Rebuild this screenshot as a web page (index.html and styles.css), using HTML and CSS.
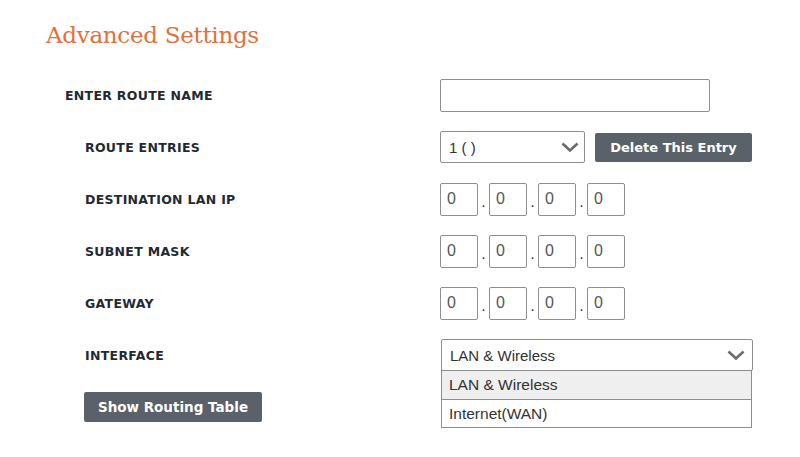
FILE: index.html
```html
<!DOCTYPE html>
<html lang="en">
<head>
  <meta charset="UTF-8">
  <meta name="viewport" content="width=device-width, initial-scale=1.0">
  <title>Advanced Settings</title>
  <link rel="stylesheet" href="styles.css">
</head>
<body>
  <h1>Advanced Settings</h1>
  <form id="routeForm">
    <!-- Route name -->
    <div class="row">
      <label class="label label-top" for="route_name">ENTER ROUTE NAME</label>
      <input type="text" id="route_name" class="text-input">
    </div>

    <!-- Route entries -->
    <div class="row">
      <label class="label">ROUTE ENTRIES</label>
      <div class="select select-entries">
        <span>1 ( )</span>
        <svg class="chevron" width="18" height="10" viewBox="0 0 18 10"><path d="M1.5 1.5 L9 8.5 L16.5 1.5" fill="none" stroke="#6b6b6b" stroke-width="2.6"/></svg>
      </div>
      <button type="button" class="btn btn-delete">Delete This Entry</button>
    </div>

    <!-- Destination LAN IP -->
    <div class="row">
      <label class="label">DESTINATION LAN IP</label>
      <div class="ip">
        <input type="text" value="0"><span class="dot">.</span>
        <input type="text" value="0"><span class="dot">.</span>
        <input type="text" value="0"><span class="dot">.</span>
        <input type="text" value="0">
      </div>
    </div>

    <!-- Subnet mask -->
    <div class="row">
      <label class="label">SUBNET MASK</label>
      <div class="ip">
        <input type="text" value="0"><span class="dot">.</span>
        <input type="text" value="0"><span class="dot">.</span>
        <input type="text" value="0"><span class="dot">.</span>
        <input type="text" value="0">
      </div>
    </div>

    <!-- Gateway -->
    <div class="row">
      <label class="label">GATEWAY</label>
      <div class="ip">
        <input type="text" value="0"><span class="dot">.</span>
        <input type="text" value="0"><span class="dot">.</span>
        <input type="text" value="0"><span class="dot">.</span>
        <input type="text" value="0">
      </div>
    </div>

    <!-- Interface (open dropdown) -->
    <div class="row">
      <label class="label">INTERFACE</label>
      <div class="select select-interface">
        <span>LAN &amp; Wireless</span>
        <svg class="chevron" width="18" height="10" viewBox="0 0 18 10"><path d="M1.5 1.5 L9 8.5 L16.5 1.5" fill="none" stroke="#6b6b6b" stroke-width="2.6"/></svg>
        <ul class="options">
          <li class="selected">LAN &amp; Wireless</li>
          <li>Internet(WAN)</li>
        </ul>
      </div>
    </div>

    <div class="actions">
      <button type="button" class="btn btn-table">Show Routing Table</button>
    </div>
  </form>
</body>
</html>
```

FILE: styles.css
```css
/* General Styles */
html, body {
  min-height: 457px;
}

body {
  margin: 0;
  padding: 0;
  background-color: #fff;
  font-family: "DejaVu Sans", sans-serif;
  color: #1f2a33;
}

h1 {
  margin: 0 0 19px 0;
  padding: 20px 0 0 46px;
  height: 30px;
  line-height: 30px;
  font-family: "DejaVu Serif", serif;
  font-weight: normal;
  font-size: 23px;
  letter-spacing: -0.3px;
  color: #e2703a;
}

form {
  margin: 0;
}

.row {
  display: flex;
  align-items: center;
  height: 52px;
}

.label {
  box-sizing: border-box;
  width: 440px;
  padding-left: 85px;
  font-size: 12.5px;
  font-weight: bold;
  letter-spacing: 0.3px;
}

.label-top {
  padding-left: 65px;
}

.text-input {
  box-sizing: border-box;
  width: 270px;
  height: 33px;
  margin: 0;
  border: 1px solid #8e8e8e;
  border-radius: 2px;
}

/* Select look-alikes */
.select {
  position: relative;
  box-sizing: border-box;
  display: flex;
  align-items: center;
  justify-content: space-between;
  height: 32px;
  padding: 0 5px 0 8px;
  border: 1px solid #8e8e8e;
  border-radius: 2px;
  font-family: "Liberation Sans", Arial, sans-serif;
  font-size: 15px;
  color: #333;
}

.select-entries {
  width: 145px;
}

.select-interface {
  width: 312px;
  margin-left: 1px;
  padding-right: 7px;
  z-index: 2;
}

.options {
  position: absolute;
  top: 30px;
  left: -1px;
  right: 0;
  margin: 0;
  padding: 0;
  list-style: none;
  border: 1px solid #8e8e8e;
  background: #fff;
}

.options li {
  box-sizing: border-box;
  height: 28px;
  line-height: 27px;
  padding-left: 7px;
  font-size: 15.5px;
}

.options li + li {
  border-top: 1px solid #8e8e8e;
}

.options li.selected {
  background: #efefef;
}

/* Buttons */
.btn {
  border: none;
  border-radius: 2px;
  background-color: #5a6169;
  color: #fff;
  font-family: "DejaVu Sans", sans-serif;
  font-weight: bold;
  font-size: 13px;
  padding: 0;
}

.btn-delete {
  width: 157px;
  height: 29px;
  margin-left: 10px;
}

.actions {
  padding: 11px 0 0 84px;
}

.btn-table {
  width: 178px;
  height: 30px;
  font-size: 13.5px;
}

/* IP address boxes */
.ip {
  display: flex;
  align-items: center;
}

.ip input {
  box-sizing: border-box;
  width: 38px;
  height: 33px;
  margin: 0;
  padding: 0 0 0 6px;
  border: 1px solid #8e8e8e;
  border-radius: 2px;
  font-family: "Liberation Sans", Arial, sans-serif;
  font-size: 16px;
  color: #555;
}

.dot {
  width: 11px;
  text-align: center;
  font-size: 14px;
  color: #333;
  padding-top: 6px;
}
```
